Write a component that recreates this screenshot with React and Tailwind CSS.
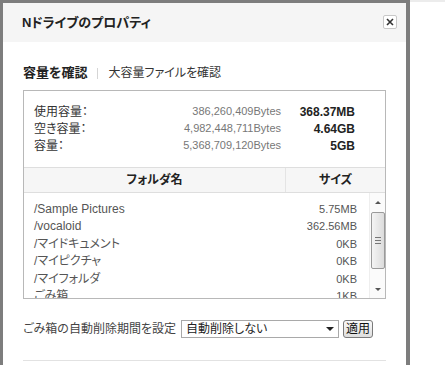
import React from "react";

const jp = { fontFamily: '"Liberation Sans", "Noto Sans CJK JP", sans-serif', fontFeatureSettings: '"palt"' };

const usage = [
  { label: "使用容量：", bytes: "386,260,409Bytes", size: "368.37MB" },
  { label: "空き容量：", bytes: "4,982,448,711Bytes", size: "4.64GB" },
  { label: "容量：", bytes: "5,368,709,120Bytes", size: "5GB" },
];

const folders = [
  { name: "/Sample Pictures", size: "5.75MB" },
  { name: "/vocaloid", size: "362.56MB" },
  { name: "/マイドキュメント", size: "0KB" },
  { name: "/マイピクチャ", size: "0KB" },
  { name: "/マイフォルダ", size: "0KB" },
  { name: "ごみ箱", size: "1KB" },
];

function Scrollbar() {
  return (
    <div className="w-[16px] h-full flex flex-col items-center bg-[#fbfbfb] border-l border-[#eeeeee]">
      <div className="h-[18px] flex items-center justify-center">
        <div className="w-0 h-0 border-l-[3px] border-r-[3px] border-b-[3px] border-l-transparent border-r-transparent border-b-[#555]" />
      </div>
      <div className="w-[14px] h-[57px] mt-[1px] rounded-[2px] border border-[#9a9a9a] bg-gradient-to-r from-[#f4f4f4] to-[#dcdcdc] flex flex-col items-center justify-center gap-[2px]">
        <div className="w-[6px] h-px bg-[#777]" />
        <div className="w-[6px] h-px bg-[#777]" />
        <div className="w-[6px] h-px bg-[#777]" />
      </div>
      <div className="flex-1" />
      <div className="h-[18px] flex items-center justify-center">
        <div className="w-0 h-0 border-l-[3px] border-r-[3px] border-t-[3px] border-l-transparent border-r-transparent border-t-[#555]" />
      </div>
    </div>
  );
}

export default function App() {
  return (
    <div className="w-[445px] h-[365px] bg-white flex overflow-hidden text-[#333]" style={jp}>
      <div className="w-[410px] h-full border-l-[3px] border-t-[3px] border-r-[4px] border-[#7d7d7d] bg-white flex flex-col">
        {/* header */}
        <div className="h-[39px] bg-[#f5f5f5] flex items-center justify-between pl-[19px] pr-[9px]">
          <span className="text-[13px] font-bold text-[#222]">Nドライブのプロパティ</span>
          <div className="w-[14px] h-[14px] mt-[-2px] border border-[#c8c8c8] rounded-[2px] bg-white flex items-center justify-center">
            <svg width="8" height="8" viewBox="0 0 8 8">
              <path d="M1 1 L7 7 M7 1 L1 7" stroke="#333" strokeWidth="1.6" />
            </svg>
          </div>
        </div>

        <div className="px-[20px] flex flex-col">
          {/* tabs */}
          <div className="mt-[23px] h-[16px] flex items-center text-[12px] leading-[16px]">
            <span className="font-bold text-[#222] text-[13px]">容量を確認</span>
            <span className="mx-[10px] w-px h-[11px] bg-[#d5d5d5]" />
            <span className="text-[#333]">大容量ファイルを確認</span>
          </div>

          {/* box */}
          <div className="mt-[9px] border border-[#b8b8b8] flex flex-col">
            <div className="pt-[12px] pb-[13px] pl-[10px] pr-[30px]">
              {usage.map((u) => (
                <div key={u.label} className="flex items-center h-[17px]">
                  <span className="flex-1 text-[12px] text-[#333]">{u.label}</span>
                  <span className="text-[11px] text-[#777]">{u.bytes}</span>
                  <span className="w-[74px] text-right text-[12px] font-bold text-[#222]">{u.size}</span>
                </div>
              ))}
            </div>

            <div className="h-[26px] flex border-t border-b border-[#dedede] bg-[#f6f6f6] text-[12px] font-bold text-[#222]">
              <div className="w-[262px] border-r border-[#e4e4e4] flex items-center justify-center">フォルダ名</div>
              <div className="flex-1 flex items-center justify-center">サイズ</div>
            </div>

            <div className="h-[105px] flex overflow-hidden">
              <div className="flex-1 pt-[7px] pl-[10px] pr-[12px] text-[#555]">
                {folders.map((f) => (
                  <div key={f.name} className="flex items-center justify-between h-[17.5px]">
                    <span className="text-[12px]">{f.name}</span>
                    <span className="text-[11px]">{f.size}</span>
                  </div>
                ))}
              </div>
              <Scrollbar />
            </div>
          </div>

          {/* trash setting */}
          <div className="mt-[21px] h-[18px] flex items-center text-[12px]">
            <span className="w-[152px] whitespace-nowrap text-[#444]">ごみ箱の自動削除期間を設定</span>
            <div className="ml-[6px] w-[158px] h-[18px] border border-[#a9a9a9] bg-white flex items-center pl-[4px] pr-[4px]">
              <span className="flex-1 text-[#222]">自動削除しない</span>
              <div className="w-0 h-0 border-l-[4px] border-r-[4px] border-t-[4px] border-l-transparent border-r-transparent border-t-[#222]" />
            </div>
            <button className="ml-[4px] w-[30px] h-[18px] rounded-[3px] border border-[#7a7a7a] bg-gradient-to-b from-[#fafafa] to-[#dedede] text-[12px] leading-none text-[#111] flex items-center justify-center">
              適用
            </button>
          </div>

          <div className="mt-[22px] h-px bg-[#e2e2e2]" />
        </div>
      </div>
      <div className="flex-1 h-full border-t-[2px] border-[#ececec]" />
    </div>
  );
}
